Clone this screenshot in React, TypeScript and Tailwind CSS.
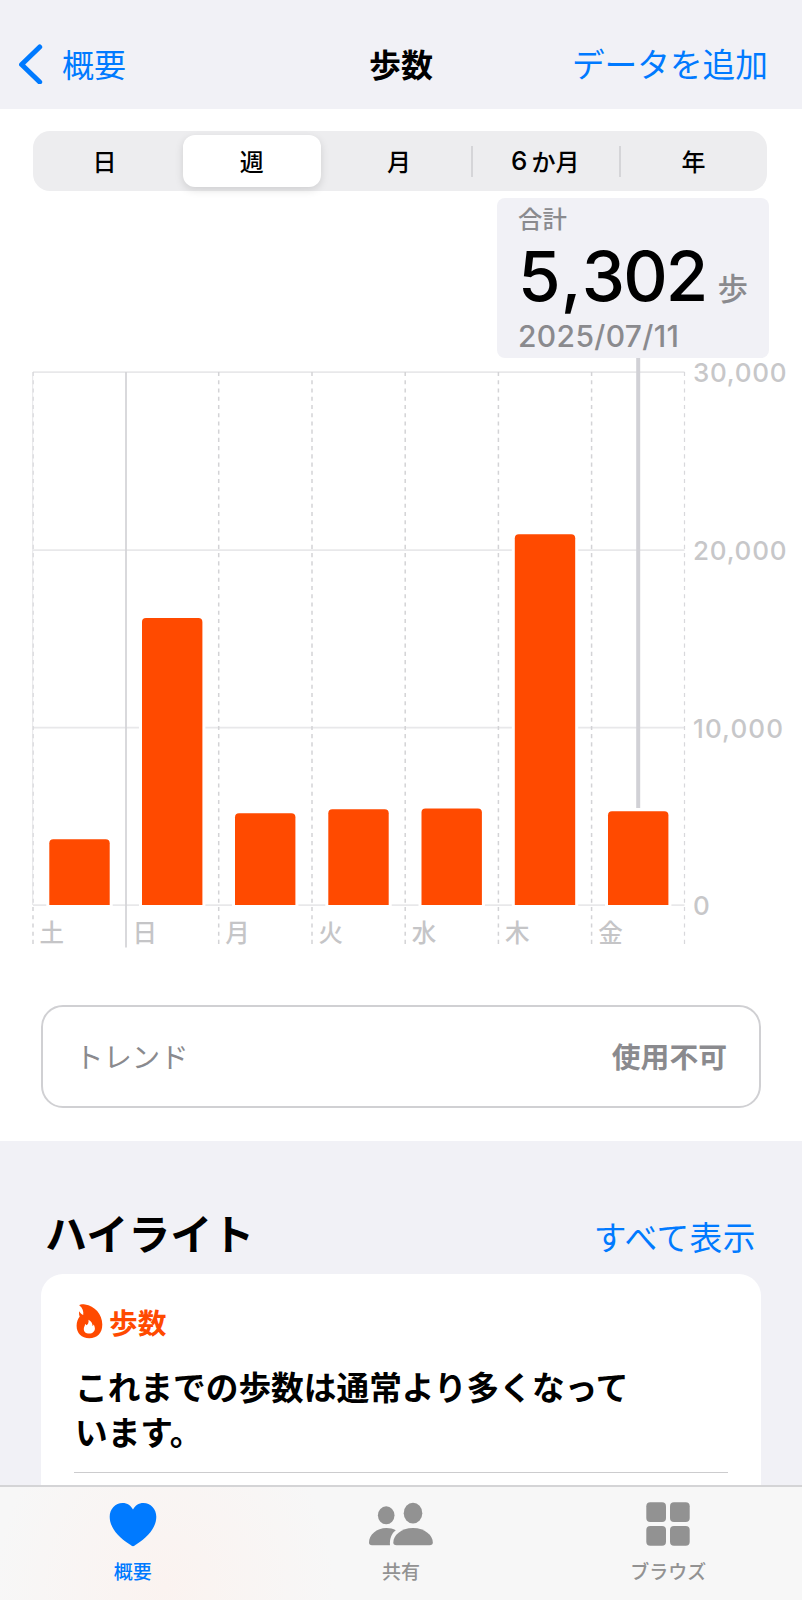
import React from 'react'

const days = [
    { label: '土', x: 33, bar: 49.3, top: 839.3 },
    { label: '日', x: 126, bar: 142, top: 618 },
    { label: '月', x: 218.7, bar: 235, top: 813.3 },
    { label: '火', x: 312, bar: 328.3, top: 809.2 },
    { label: '水', x: 405.2, bar: 421.5, top: 808.6 },
    { label: '木', x: 498.4, bar: 514.8, top: 534.2 },
    { label: '金', x: 591.6, bar: 608, top: 811.3 },
]

const ticks = [
    { label: '30,000', y: 372.2, width: 93.5 },
    { label: '20,000', y: 550.2, width: 93.5 },
    { label: '10,000', y: 727.7, width: 90 },
    { label: '0', y: 905.2, width: 16 },
]

function barPath(x: number, top: number) {
    return `M${x} 905V${top + 4}q0 -4 4 -4h52.4q4 0 4 4V905z`
}

function Chart() {
    return (
        <svg className="block overflow-visible" width="802" height="592" viewBox="0 358 802 592">
            {ticks.map((t) => (
                <g key={t.label}>
                    <path d={`M33 ${t.y}H684.5`} stroke="#e8e8ea" strokeWidth="1.7" />
                    <text
                        x="693"
                        y={t.y + 10}
                        textLength={t.width}
                        className="font-['Inter'] text-[26px] font-medium"
                        fill="#c7c7c9"
                    >
                        {t.label}
                    </text>
                </g>
            ))}
            {days.map((d) => (
                <g key={d.label}>
                    {d.label === '日' ? (
                        <path d={`M${d.x} 372V947.5`} stroke="#d3d3d6" strokeWidth="1.7" />
                    ) : (
                        <path d={`M${d.x} 372V947.5`} stroke="#d3d3d6" strokeWidth="1.5" strokeDasharray="4.1 4.13" />
                    )}
                    <text x={d.x + 6.6} y="941.8" fontSize="24.5" fontWeight="500" fill="#c5c5c7">{d.label}</text>
                </g>
            ))}
            <path d="M32.7 372V905" stroke="#e5e5e8" strokeWidth="1" />
            <path d="M684.5 372V947.5" stroke="#d8d8db" strokeWidth="1.2" strokeDasharray="4.1 4.13" />
            {/* selected day */}
            <path d="M638.2 358V808" stroke="#d1d1d6" strokeWidth="4" />
            {days.map((d) => (
                <g key={d.label}>
                    <path d={`M${d.bar - 3} 907V${d.top}h66.4V907z`} fill="#fff" />
                    <path d={barPath(d.bar, d.top)} fill="#ff4a00" />
                </g>
            ))}
        </svg>
    )
}

function FlameIcon() {
    return (
        <svg width="27" height="35" viewBox="0 0 27 35">
            <path
                fill="#ff4a00"
                fillRule="evenodd"
                d="M3.2 1.2C4.5.4 6.7.1 9 .5C18.500 1.800 26.300 10 26.300 20.500C26.300 29.500 21 34.200 13.300 34.200C5.500 34.200.600 29 .600 21.700C.600 17.600 2 14.500 3.700 12.400C3 11 2.800 8.800 3.300 7.200C4.500 9.300 5.900 10.500 7.200 10.900C7.800 7.300 6.600 3.700 3.200 1.200zM12.500 15.700C13 19 11.700 20.200 10.500 21.300C10.100 20.700 9.700 20.200 9 19.900C9.300 21.500 7.800 22.800 7.800 25C7.800 27.900 10 29.600 13.200 29.600C16.700 29.600 18.900 27.500 18.900 24.600C18.900 22.900 18.200 21.400 17.700 20.400C17.400 21.300 17 21.700 16.500 21.900C16.700 19.500 15.300 17 12.500 15.700z"
            />
        </svg>
    )
}

function HeartIcon() {
    return (
        <svg width="48" height="45" viewBox="0 0 48 45">
            <path
                fill="#007aff"
                d="M24 44.200C23 44.200 21.500 43 20.500 42.300C8.500 34.500 .7 25 .7 14.800C.7 6.700 6.500.900 13.500.900C18.500.900 22 3.500 24 7.500C26 3.500 29.500.900 34.500.900C41.500.900 47.300 6.700 47.300 14.800C47.300 25 39.500 34.500 27.500 42.300C26.500 43 25 44.200 24 44.200z"
            />
        </svg>
    )
}

function PeopleIcon() {
    return (
        <svg width="66" height="45" viewBox="0 0 66 45" fill="#929292">
            <ellipse cx="18.200" cy="13.300" rx="8.300" ry="9" />
            <ellipse cx="45" cy="11.200" rx="9.300" ry="10.400" />
            <path d="M4 43.300C2 43.300 1 42.200 1 40.500C1 33 8.500 26 18.500 26C22 26 25.200 26.800 27.800 28.200C23.800 31.200 21.500 36 22 43.300z" />
            <path d="M28.500 43.300C26.300 43.300 25.300 42.300 25.300 40.500C25.300 33.500 33 26 45 26C57 26 64.800 33.500 64.800 40.500C64.800 42.300 63.800 43.300 61.600 43.300z" />
        </svg>
    )
}

function GridIcon() {
    return (
        <svg width="44" height="44" viewBox="0 0 44 44" fill="#929292">
            <rect x="0.300" y="0.300" width="19.700" height="19.700" rx="4" />
            <rect x="24" y="0.300" width="19.700" height="19.700" rx="4" />
            <rect x="0.300" y="24" width="19.700" height="19.700" rx="4" />
            <rect x="24" y="24" width="19.700" height="19.700" rx="4" />
        </svg>
    )
}

export default function App() {
    return (
        <div lang="ja" className="flex h-[1600px] w-[802px] flex-col overflow-hidden bg-white font-['Noto_Sans_CJK_JP',sans-serif] text-black">
            <header className="grid h-[109px] shrink-0 grid-cols-3 items-center bg-[#f1f1f6] pt-[18px] pr-[34px] pl-[19px] text-[32.7px] leading-[48px]">
                <button className="flex items-center text-[#007aff]">
                    <svg width="24" height="40" viewBox="0 0 24 40" fill="none">
                        <path d="M20.700 3L2.600 20.500L20.700 38" stroke="#007aff" strokeWidth="5" strokeLinecap="round" strokeLinejoin="round" />
                    </svg>
                    <span className="mb-[2px] ml-[19px] text-[32px]">概要</span>
                </button>
                <h1 className="mb-[2px] pl-[15px] text-center text-[32px] font-bold">歩数</h1>
                <button className="mb-[2px] text-right whitespace-nowrap text-[#007aff]">データを追加</button>
            </header>

            <main className="flex h-[1376px] shrink-0 flex-col overflow-hidden">
                <div className="mt-[22px] ml-[33px] grid h-[60px] w-[734px] shrink-0 grid-cols-5 items-center rounded-[17px] bg-[#ededef] text-center text-[24px] leading-[36px] font-medium">
                    <span className="pr-[4px]">日</span>
                    <span className="mr-[6px] ml-[3px] flex h-[52px] items-center justify-center rounded-[12px] bg-white shadow-[0_3px_8px_rgba(0,0,0,0.13)]">週</span>
                    <span className="pr-[2px]">月</span>
                    <span className="-mr-[1px] -ml-[2px] flex h-[31px] items-center justify-center border-x-2 border-[#d5d5d8]">
                        <span className="mr-[4px] -ml-[2px] font-['Inter'] text-[26px]">6</span>か月
                    </span>
                    <span>年</span>
                </div>

                <div className="mt-[7px] ml-[497px] flex h-[160px] w-[272px] shrink-0 flex-col rounded-[8px] bg-[#f1f1f6] pl-[21px] text-[#8a8a8e]">
                    <span className="mt-[2px] text-[24.400px] leading-[36px] font-medium">合計</span>
                    <div className="flex h-[79px] items-baseline">
                        <span className="font-['Inter'] text-[69px] leading-[80px] font-medium tracking-[-1.900px] text-black">
                            5<span className="mx-[2px]">,</span>302
                        </span>
                        <span className="relative -top-px ml-[11px] text-[30.500px] leading-[40px] font-medium">歩</span>
                    </div>
                    <span className="mt-[3px] font-['Inter'] text-[30px] leading-[36px] font-medium tracking-[0.350px]">2025/07/11</span>
                </div>

                <div className="shrink-0">
                    <Chart />
                </div>

                <div className="mt-[55px] ml-[41px] flex h-[103px] w-[720px] shrink-0 items-center justify-between rounded-[22px] border-2 border-[#d0d0d3] pr-[32px] pb-[2px] pl-[32px] text-[28.800px] leading-[42px] text-[#8a8a8e]">
                    <span className="text-[28.400px]">トレンド</span>
                    <span className="font-bold">使用不可</span>
                </div>

                <section className="mt-[33px] flex-1 bg-[#f1f1f6] px-[41px]">
                    <div className="flex h-[133px] items-end justify-between pr-[5px] pl-[4px]">
                        <h2 className="mb-[12px] text-[42px] leading-[60px] font-bold">ハイライト</h2>
                        <button className="mb-[14px] text-[32.700px] leading-[48px] tracking-[0.500px] text-[#007aff]">すべて表示</button>
                    </div>
                    <div className="h-[240px] rounded-[22px] bg-white px-[33px] pt-[28px]">
                        <div className="flex h-[38px] items-center gap-[6px] pl-[2px] text-[28.700px] leading-[38px] font-bold text-[#ff4a00]">
                            <FlameIcon />
                            <span className="mt-[1px]">歩数</span>
                        </div>
                        <p className="mt-[23px] w-[570px] pl-[1px] text-[32.700px] leading-[45px] font-bold">これまでの歩数は通常より多くなっています。</p>
                        <div className="mt-[19px] h-px bg-[#ccccce]" />
                    </div>
                </section>
            </main>

            <nav className="grid h-[115px] shrink-0 grid-cols-3 border-t-2 border-[#d4d4d6] bg-[#f7f7f7] bg-[radial-gradient(ellipse_170px_190px_at_165px_100px,#fbf3f0,#f7f7f7)] pt-[15px] text-[19px] leading-[28px] font-medium text-[#929292]">
                <div className="flex flex-col items-center gap-[10px] pr-[2px] text-[#007aff]">
                    <HeartIcon />
                    <span>概要</span>
                </div>
                <div className="flex flex-col items-center gap-[10px]">
                    <PeopleIcon />
                    <span>共有</span>
                </div>
                <div className="flex flex-col items-center gap-[11px]">
                    <GridIcon />
                    <span>ブラウズ</span>
                </div>
            </nav>
        </div>
    )
}
